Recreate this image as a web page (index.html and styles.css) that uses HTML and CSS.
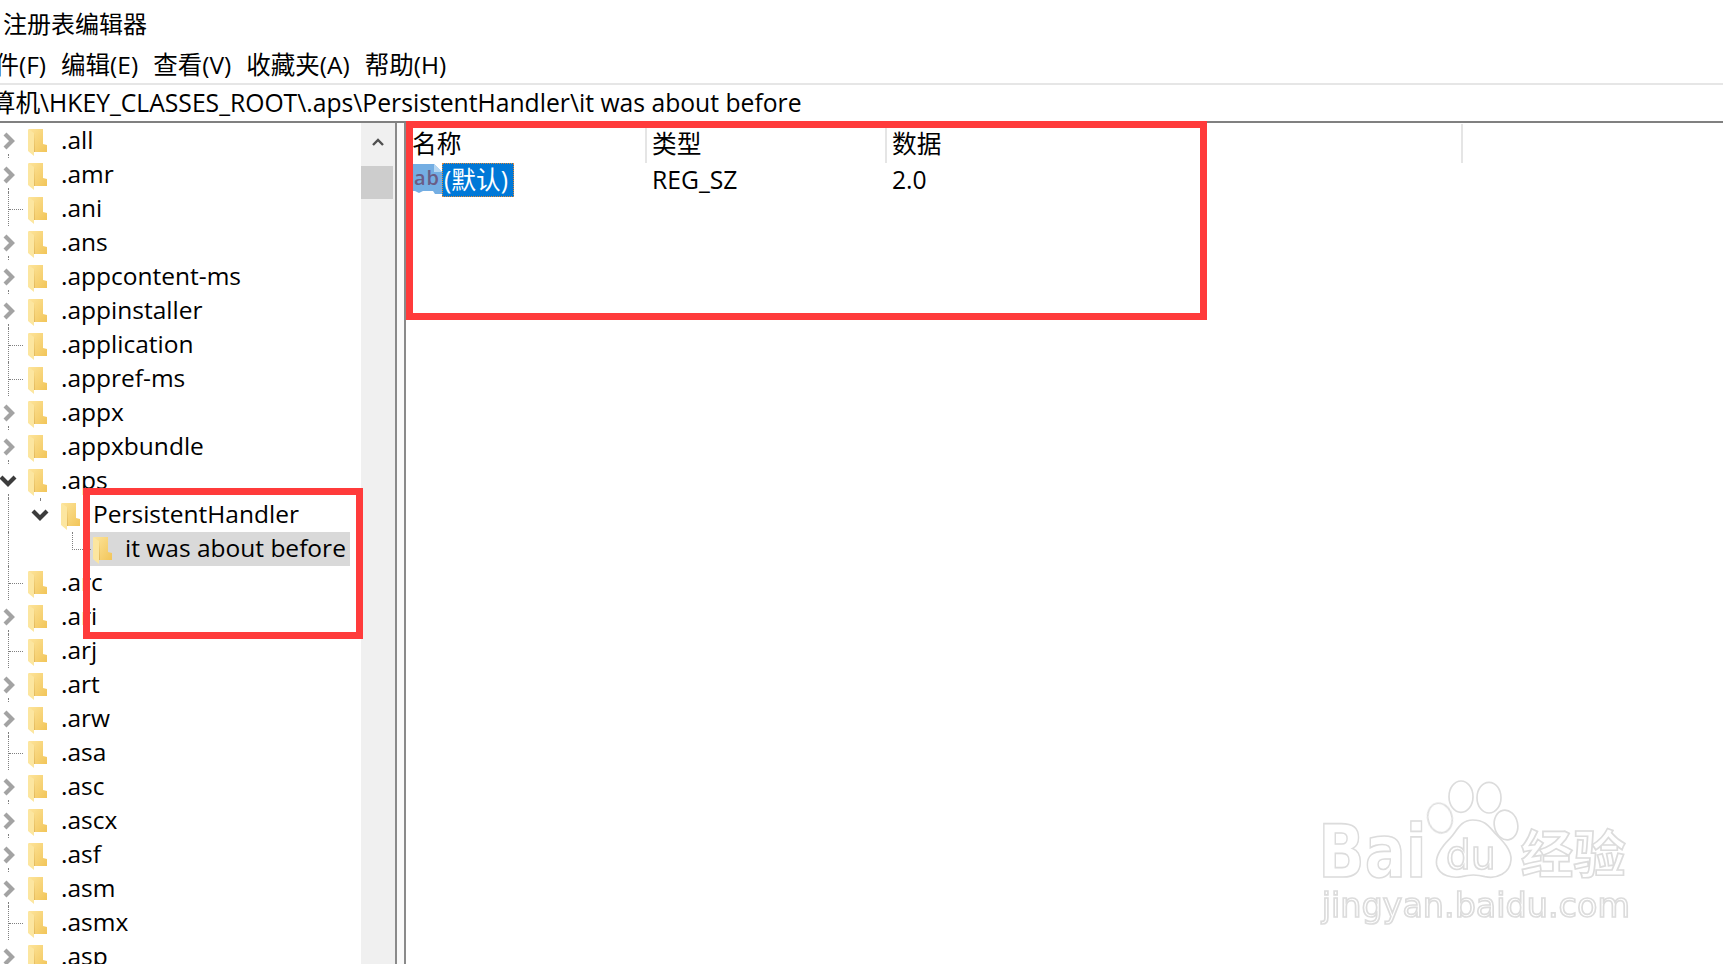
FILE: index.html
```html
<!DOCTYPE html>
<html lang="zh-CN">
<head>
    <meta charset="UTF-8">
    <title>注册表编辑器</title>
    <link rel="stylesheet" href="styles.css">
</head>
<body>
    <svg class="defs" width="0" height="0">
        <defs>
            <linearGradient id="folderFill" x1="0" y1="0" x2="1" y2="1">
                <stop offset="0" stop-color="#fde49a"/>
                <stop offset="1" stop-color="#f1c355"/>
            </linearGradient>
            <symbol id="folder" viewBox="0 0 19 27">
                <path d="M1 0H15V15L19 16V23H6V26L1 22Z" fill="url(#folderFill)"/>
                <path d="M0 0L6 4V27L0 22Z" fill="#fce6a0"/>
                <path d="M6 4L7 23H6Z" fill="#e2b95f"/>
            </symbol>
            <symbol id="closed" viewBox="0 0 14 18">
                <path d="M3 2L10 9L3 16" fill="none" stroke="#a3a3a3" stroke-width="4.200"/>
            </symbol>
            <symbol id="open" viewBox="0 0 18 12">
                <path d="M2 2L9 9L16 2" fill="none" stroke="#3c3c3c" stroke-width="4.200"/>
            </symbol>
        </defs>
    </svg>

    <div class="title">注册表编辑器</div>
    <div class="menu">
        <span class="menu-first">文件(F)</span>
        <span>编辑(E)</span>
        <span>查看(V)</span>
        <span>收藏夹(A)</span>
        <span>帮助(H)</span>
    </div>
    <div class="address"><span class="address-text">计算机\HKEY_CLASSES_ROOT\.aps\PersistentHandler\it was about before</span></div>

    <div class="main">
        <div class="tree">
            <div class="row"><svg class="arrow"><use href="#closed"/></svg><svg class="folder"><use href="#folder"/></svg><span>.all</span></div>
            <div class="row"><svg class="arrow"><use href="#closed"/></svg><svg class="folder"><use href="#folder"/></svg><span>.amr</span></div>
            <div class="row leaf"><svg class="folder"><use href="#folder"/></svg><span>.ani</span></div>
            <div class="row"><svg class="arrow"><use href="#closed"/></svg><svg class="folder"><use href="#folder"/></svg><span>.ans</span></div>
            <div class="row"><svg class="arrow"><use href="#closed"/></svg><svg class="folder"><use href="#folder"/></svg><span>.appcontent-ms</span></div>
            <div class="row"><svg class="arrow"><use href="#closed"/></svg><svg class="folder"><use href="#folder"/></svg><span>.appinstaller</span></div>
            <div class="row leaf"><svg class="folder"><use href="#folder"/></svg><span>.application</span></div>
            <div class="row leaf"><svg class="folder"><use href="#folder"/></svg><span>.appref-ms</span></div>
            <div class="row"><svg class="arrow"><use href="#closed"/></svg><svg class="folder"><use href="#folder"/></svg><span>.appx</span></div>
            <div class="row"><svg class="arrow"><use href="#closed"/></svg><svg class="folder"><use href="#folder"/></svg><span>.appxbundle</span></div>
            <div class="row"><svg class="arrow arrow-open"><use href="#open"/></svg><svg class="folder"><use href="#folder"/></svg><span>.aps</span></div>
            <div class="row level-1"><svg class="arrow arrow-open"><use href="#open"/></svg><svg class="folder"><use href="#folder"/></svg><span>PersistentHandler</span></div>
            <div class="row level-2 selected"><svg class="folder"><use href="#folder"/></svg><span>it was about before</span></div>
            <div class="row leaf"><svg class="folder"><use href="#folder"/></svg><span>.arc</span></div>
            <div class="row"><svg class="arrow"><use href="#closed"/></svg><svg class="folder"><use href="#folder"/></svg><span>.ari</span></div>
            <div class="row leaf"><svg class="folder"><use href="#folder"/></svg><span>.arj</span></div>
            <div class="row"><svg class="arrow"><use href="#closed"/></svg><svg class="folder"><use href="#folder"/></svg><span>.art</span></div>
            <div class="row"><svg class="arrow"><use href="#closed"/></svg><svg class="folder"><use href="#folder"/></svg><span>.arw</span></div>
            <div class="row leaf"><svg class="folder"><use href="#folder"/></svg><span>.asa</span></div>
            <div class="row"><svg class="arrow"><use href="#closed"/></svg><svg class="folder"><use href="#folder"/></svg><span>.asc</span></div>
            <div class="row"><svg class="arrow"><use href="#closed"/></svg><svg class="folder"><use href="#folder"/></svg><span>.ascx</span></div>
            <div class="row"><svg class="arrow"><use href="#closed"/></svg><svg class="folder"><use href="#folder"/></svg><span>.asf</span></div>
            <div class="row"><svg class="arrow"><use href="#closed"/></svg><svg class="folder"><use href="#folder"/></svg><span>.asm</span></div>
            <div class="row leaf"><svg class="folder"><use href="#folder"/></svg><span>.asmx</span></div>
            <div class="row"><svg class="arrow"><use href="#closed"/></svg><svg class="folder"><use href="#folder"/></svg><span>.asp</span></div>
        </div>

        <div class="scrollbar">
            <svg class="scroll-up" width="14" height="10" viewBox="0 0 14 10"><path d="M2 8L7 3L12 8" fill="none" stroke="#505050" stroke-width="2.400"/></svg>
            <div class="scroll-thumb"></div>
        </div>
        <div class="splitter"></div>

        <div class="values">
            <div class="values-head">
                <div class="col col-name">名称</div>
                <div class="col col-type">类型</div>
                <div class="col col-data">数据</div>
            </div>
            <div class="values-row">
                <div class="cell-name">
                    <svg class="ab-icon" width="30" height="32" viewBox="0 0 30 32">
                        <path d="M0 1H22L30 9V31H23L21 28H11L7 30L3 28H0Z" fill="#74aee3"/>
                        <path d="M22 1V9H30" fill="#b5d6f2"/>
                        <text x="2" y="22" class="ab-text">ab</text>
                    </svg>
                    <span class="cell-selected">(默认)</span>
                </div>
                <div class="cell-type">REG_SZ</div>
                <div class="cell-data">2.0</div>
            </div>
        </div>
    </div>

    <svg class="watermark" width="380" height="204" viewBox="0 0 1140 612">
        <defs>
            <filter id="soft"><feGaussianBlur stdDeviation="1.500"/></filter>
        </defs>
        <g filter="url(#soft)" fill="#fff" stroke="#dcdcdc" stroke-width="5">
            <ellipse cx="543" cy="110" rx="36" ry="47"/>
            <ellipse cx="627" cy="113" rx="36" ry="46"/>
            <ellipse cx="480" cy="174" rx="36" ry="45" transform="rotate(-15 480 174)"/>
            <ellipse cx="678" cy="195" rx="35" ry="45" transform="rotate(-12 678 195)"/>
            <path d="M578 180C540 180 530 215 510 235C480 265 465 290 470 315C478 350 520 355 545 350C570 343 590 343 615 350C650 358 690 340 693 300C695 270 670 245 650 225C630 205 620 180 578 180Z"/>
            <text x="115" y="350" class="wm-bai" textLength="325" lengthAdjust="spacingAndGlyphs">Bai</text>
            <text x="497" y="326" class="wm-du" textLength="150" lengthAdjust="spacingAndGlyphs">du</text>
            <text x="722" y="340" class="wm-cn" textLength="315" lengthAdjust="spacingAndGlyphs">经验</text>
            <text x="125" y="472" class="wm-url" textLength="925" lengthAdjust="spacingAndGlyphs">jingyan.baidu.com</text>
        </g>
    </svg>

    <div class="mark mark-values"></div>
    <div class="mark mark-tree"></div>
</body>
</html>
```

FILE: styles.css
```css
html, body {
    margin: 0;
    padding: 0;
    height: 964px;
    overflow: hidden;
    background: #fff;
}

body {
    position: relative;
    font-family: "Open Sans", "Noto Sans CJK SC", sans-serif;
    font-size: 24.5px;
    color: #000;
}

.defs {
    display: block;
}

.title {
    height: 46px;
    line-height: 48px;
    padding-left: 3px;
    font-size: 24px;
}

.menu {
    display: flex;
    gap: 15px;
    height: 37px;
    line-height: 37px;
    margin-left: -30px;
    white-space: nowrap;
}

.address {
    height: 36px;
    line-height: 36px;
    border-top: 2px solid #e6e6e6;
    border-bottom: 2px solid #808080;
    white-space: nowrap;
    overflow: hidden;
    font-size: 24.7px;
}

.address-text {
    margin-left: -34px;
}

.main {
    display: flex;
    height: 841px;
    overflow: hidden;
}

.tree {
    width: 361px;
    padding-top: 1px;
    flex: none;
}

.row {
    position: relative;
    display: flex;
    align-items: center;
    height: 34px;
    padding-left: 28px;
    white-space: nowrap;
}

.row span {
    margin-left: 14px;
    padding-bottom: 4px;
}

.folder {
    width: 19px;
    height: 27px;
    margin-top: 3px;
    flex: none;
}

.arrow {
    position: absolute;
    left: 2px;
    top: 8px;
    width: 14px;
    height: 18px;
}

.arrow-open {
    left: -1px;
    top: 11px;
    width: 18px;
    height: 12px;
}

/* dotted tree lines */
.row::before {
    content: "";
    position: absolute;
    left: 8px;
    top: 0;
    height: 34px;
    border-left: 1px dotted #808080;
}

.row:has(.arrow)::before {
    top: 30px;
    height: 4px;
}

.leaf::after {
    content: "";
    position: absolute;
    left: 9px;
    top: 17px;
    width: 14px;
    border-top: 1px dotted #808080;
}

.level-1 {
    padding-left: 61px;
}

.level-1 span {
    margin-left: 13px;
}

.level-1 .arrow-open {
    left: 31px;
}

.row.level-1::before {
    top: 0;
    height: 34px;
}

.level-1::after {
    content: "";
    position: absolute;
    left: 40px;
    top: 0;
    height: 2px;
    border-left: 1px dotted #808080;
}

.level-2 {
    padding-left: 93px;
}

.level-2 span {
    margin-left: 13px;
}

.level-2::after {
    content: "";
    position: absolute;
    left: 72px;
    top: 0;
    width: 18px;
    height: 17px;
    border-left: 1px dotted #808080;
    border-bottom: 1px dotted #808080;
}

.selected {
    background: linear-gradient(#d9d9d9, #d9d9d9) 90px 0 / 260px 34px no-repeat;
}

.scrollbar {
    flex: none;
    width: 34px;
    background: #f0f0f0;
    padding-top: 14px;
    border-right: 2px solid #8a8a8a;
}

.scroll-up {
    display: block;
    margin-left: 10px;
}

.scroll-thumb {
    width: 32px;
    height: 33px;
    margin-top: 19px;
    background: #cdcdcd;
}

.splitter {
    flex: none;
    width: 7px;
    background: #fafafa;
    border-right: 2px solid #8a8a8a;
}

.values {
    flex: 1;
    padding-top: 1px;
    font-size: 24.7px;
}

.values-head {
    display: flex;
    height: 39px;
    line-height: 40px;
}

.col {
    border-right: 2px solid #e5e5e5;
    padding-left: 6px;
    box-sizing: border-box;
}

.col-name {
    width: 241px;
}

.col-type {
    width: 240px;
    padding-left: 5px;
}

.col-data {
    width: 576px;
    padding-left: 5px;
}

.values-row {
    display: flex;
    height: 34px;
    line-height: 34px;
}

.cell-name {
    display: flex;
    width: 246px;
    padding-left: 6px;
    flex: none;
    box-sizing: border-box;
}

.ab-icon {
    flex: none;
}

.ab-text {
    font-family: "Open Sans", sans-serif;
    font-size: 20px;
    font-weight: 600;
    letter-spacing: 1px;
    fill: #6a5c86;
}

.cell-selected {
    width: 72px;
    height: 34px;
    padding-left: 2px;
    box-sizing: border-box;
    background: #0078d7;
    color: #fff;
    outline: 1px dotted #e08a3c;
    outline-offset: -1px;
}

.cell-type {
    width: 240px;
}

.watermark {
    position: absolute;
    left: 1280px;
    top: 760px;
}

.wm-bai {
    font-family: "DejaVu Sans", sans-serif;
    font-size: 220px;
    font-weight: bold;
}

.wm-du {
    font-family: "DejaVu Sans", sans-serif;
    font-size: 120px;
}

.wm-cn {
    font-family: "Noto Sans CJK SC", sans-serif;
    font-size: 155px;
    font-weight: bold;
}

.wm-url {
    font-family: "DejaVu Sans", sans-serif;
    font-size: 100px;
}

/* red annotation boxes */
.mark {
    position: absolute;
    border: 7px solid #ff3b3b;
    box-sizing: border-box;
}

.mark-values {
    left: 406px;
    top: 121px;
    width: 801px;
    height: 199px;
}

.mark-tree {
    left: 83px;
    top: 488px;
    width: 280px;
    height: 151px;
}
```
